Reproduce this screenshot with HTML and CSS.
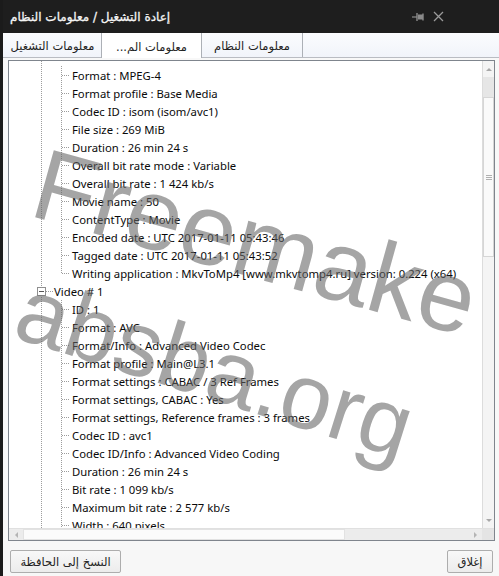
FILE: index.html
```html
<!DOCTYPE html>
<html lang="ar">
<head>
<meta charset="utf-8">
<title>معلومات النظام</title>
<link rel="stylesheet" href="styles.css">
</head>
<body>
<div class="window">
  <header class="titlebar">
    <span class="title" dir="rtl">إعادة التشغيل / معلومات النظام</span>
    <span class="controls">
      <svg class="pin" width="14" height="10" viewBox="0 0 14 10"><path d="M0 5h5" stroke="#8a8a8a" stroke-width="1.2"/><path d="M5 1v8" stroke="#8a8a8a" stroke-width="1.4"/><path d="M6 2.5h5v5H6z" fill="#8a8a8a"/><path d="M11 1.5v7" stroke="#8a8a8a" stroke-width="1.4"/></svg>
      <svg class="close" width="11" height="11" viewBox="0 0 11 11"><path d="M1 1l9 9M10 1l-9 9" stroke="#9a9a9a" stroke-width="1.3"/></svg>
    </span>
  </header>
  <nav class="tabs">
    <div class="tab first"><span dir="rtl">معلومات التشغيل</span></div>
    <div class="tab active"><span dir="ltr">...معلومات الم</span></div>
    <div class="tab"><span dir="rtl">معلومات النظام</span></div>
  </nav>
  <main class="panel">
    <div class="tree">
      <div class="tree-body">
        <ul class="rows">
          <li class="row leaf">Format : MPEG-4</li>
          <li class="row leaf">Format profile : Base Media</li>
          <li class="row leaf">Codec ID : isom (isom/avc1)</li>
          <li class="row leaf">File size : 269 MiB</li>
          <li class="row leaf">Duration : 26 min 24 s</li>
          <li class="row leaf">Overall bit rate mode : Variable</li>
          <li class="row leaf">Overall bit rate : 1 424 kb/s</li>
          <li class="row leaf">Movie name : 50</li>
          <li class="row leaf">ContentType : Movie</li>
          <li class="row leaf">Encoded date : UTC 2017-01-11 05:43:46</li>
          <li class="row leaf">Tagged date : UTC 2017-01-11 05:43:52</li>
          <li class="row leaf last">Writing application : MkvToMp4 [www.mkvtomp4.ru] version: 0.224 (x64)</li>
          <li class="row node"><span class="toggle"></span><span class="link"></span>Video # 1</li>
          <li class="row leaf">ID : 1</li>
          <li class="row leaf">Format : AVC</li>
          <li class="row leaf">Format/Info : Advanced Video Codec</li>
          <li class="row leaf">Format profile : Main@L3.1</li>
          <li class="row leaf">Format settings : CABAC / 3 Ref Frames</li>
          <li class="row leaf">Format settings, CABAC : Yes</li>
          <li class="row leaf">Format settings, Reference frames : 3 frames</li>
          <li class="row leaf">Codec ID : avc1</li>
          <li class="row leaf">Codec ID/Info : Advanced Video Coding</li>
          <li class="row leaf">Duration : 26 min 24 s</li>
          <li class="row leaf">Bit rate : 1 099 kb/s</li>
          <li class="row leaf">Maximum bit rate : 2 577 kb/s</li>
          <li class="row leaf">Width : 640 pixels</li>
        </ul>
        <div class="vscroll">
          <span class="arrow up"></span>
          <span class="track-top"></span>
          <span class="thumb"><span class="grip"></span></span>
          <span class="track-rest"></span>
          <span class="arrow down"></span>
        </div>
      </div>
      <div class="hscroll">
        <span class="harrow left"></span>
        <span class="hthumb"></span>
        <span class="htrack"></span>
        <span class="harrow right"></span>
        <span class="corner"></span>
      </div>
    </div>
  </main>
  <footer class="footer">
    <button class="btn copy" dir="rtl">النسخ إلى الحافظة</button>
    <button class="btn close-btn" dir="rtl">إغلاق</button>
  </footer>
  <div class="watermark">
    <span class="wm wm1">Freemake</span>
    <span class="wm wm2">absba.org</span>
  </div>
</div>
</body>
</html>
```

FILE: styles.css
```css
* { box-sizing: border-box; }
html, body { margin: 0; padding: 0; }
body {
  width: 499px;
  height: 576px;
  overflow: hidden;
  font-family: "Noto Sans", "DejaVu Sans", sans-serif;
  font-size: 11.3px;
  color: #0a0a0a;
  background: #f7f7f7;
}
.window {
  position: relative;
  width: 499px;
  height: 576px;
  display: flex;
  flex-direction: column;
  border-left: 3px solid #1b1b1b;
  background: #f8f8f8;
  overflow: hidden;
}
.titlebar {
  height: 33px;
  flex: none;
  background: #1e1e1e;
  display: flex;
  align-items: center;
  justify-content: space-between;
  padding: 0 55px 0 7px;
  margin-left: -3px;
}
.title {
  color: #f4f4f4;
  font-family: "DejaVu Sans", sans-serif;
  font-size: 12px;
  padding-left: 3px;
  -webkit-text-stroke: 0.3px #f4f4f4;
}
.controls {
  display: flex;
  align-items: center;
  gap: 7px;
}
.tabs {
  height: 25px;
  flex: none;
  display: flex;
  background: linear-gradient(#fbfcfe, #f1f4fa);
  border-bottom: 1px solid #b9bcc2;
  padding-left: 1px;
}
.tab {
  width: 101px;
  display: flex;
  align-items: center;
  justify-content: center;
  font-family: "DejaVu Sans", sans-serif;
  font-size: 11.5px;
  color: #222;
  border-right: 1px solid #acb0b6;
  padding-top: 2px;
}
.tab.first { width: 98px; }
.tab.active {
  background: #ffffff;
  border-left: 1px solid #acb0b6;
  margin-bottom: -1px;
  margin-left: -1px;
}
.panel {
  flex: none;
  height: 483px;
  padding: 2px 4px 0 5px;
}
.tree {
  height: 481px;
  border: 1px solid #7f858d;
  background: #fff;
  display: flex;
  flex-direction: column;
}
.tree-body {
  flex: 1;
  display: flex;
  min-height: 0;
}
.rows {
  list-style: none;
  margin: 0;
  padding: 5px 0 0 0;
  flex: 1;
  overflow: hidden;
  background: repeating-linear-gradient(to bottom, #9c9c9c 0 1px, transparent 1px 2px) 32px 0 / 1px 100% no-repeat;
}
.row {
  height: 18px;
  display: flex;
  align-items: center;
  white-space: nowrap;
}
.leaf {
  padding-left: 63px;
  background:
    repeating-linear-gradient(to right, #9c9c9c 0 1px, transparent 1px 2px) 53px 9px / 8px 1px no-repeat,
    repeating-linear-gradient(to bottom, #9c9c9c 0 1px, transparent 1px 2px) 52px 0 / 1px 18px no-repeat;
}
.leaf.last {
  background:
    repeating-linear-gradient(to right, #9c9c9c 0 1px, transparent 1px 2px) 53px 9px / 8px 1px no-repeat,
    repeating-linear-gradient(to bottom, #9c9c9c 0 1px, transparent 1px 2px) 52px 0 / 1px 10px no-repeat;
}
.node {
  padding-left: 28px;
}
.toggle {
  width: 9px;
  height: 9px;
  border: 1px solid #8f8f8f;
  background: linear-gradient(#555, #555) center / 5px 1px no-repeat, #fff;
  flex: none;
}
.link {
  width: 7px;
  height: 1px;
  margin: 0 1px 0 0;
  background: repeating-linear-gradient(to right, #9c9c9c 0 1px, transparent 1px 2px);
  flex: none;
}
.vscroll {
  width: 12px;
  flex: none;
  display: flex;
  flex-direction: column;
  background: #ececec;
  border-left: 1px solid #dcdcdc;
}
.arrow {
  height: 16px;
  flex: none;
  display: flex;
  align-items: center;
  justify-content: center;
  background: #f4f4f4;
}
.arrow::before {
  content: "";
  border-left: 3px solid transparent;
  border-right: 3px solid transparent;
}
.arrow.up::before { border-bottom: 3px solid #a8a8a8; }
.arrow.down::before { border-top: 3px solid #a8a8a8; }
.track-top { height: 20px; flex: none; background: #e6e6e6; }
.thumb {
  height: 160px;
  flex: none;
  background: #fafafa;
  border: 1px solid #d6d6d6;
  display: flex;
  align-items: center;
  justify-content: center;
}
.grip {
  width: 6px;
  height: 5px;
  background: repeating-linear-gradient(to bottom, #b0b0b0 0 1px, transparent 1px 2px);
}
.track-rest { flex: 1; background: #f4f4f4; }
.hscroll {
  height: 12px;
  flex: none;
  display: flex;
  background: #ececec;
  border-top: 1px solid #e0e0e0;
}
.harrow {
  width: 14px;
  flex: none;
  display: flex;
  align-items: center;
  justify-content: center;
}
.harrow::before {
  content: "";
  border-top: 3px solid transparent;
  border-bottom: 3px solid transparent;
}
.harrow.left::before { border-right: 3px solid #b4b4b4; }
.harrow.right::before { border-left: 3px solid #b4b4b4; }
.hthumb { width: 322px; flex: none; background: #fbfbfb; border: 1px solid #e2e2e2; }
.htrack { flex: 1; background: #ececec; }
.corner { width: 12px; flex: none; background: #e4e4e4; }
.footer {
  flex: 1;
  display: flex;
  justify-content: space-between;
  align-items: flex-start;
  padding: 9px 6px 0 7px;
  background: #f7f7f7;
}
.btn {
  height: 23px;
  border: 1px solid #adadad;
  border-radius: 2px;
  background: linear-gradient(#f8f8f8, #ececec);
  font-family: "DejaVu Sans", sans-serif;
  font-size: 11.5px;
  color: #222;
  padding: 0;
  white-space: nowrap;
}
.btn.copy { width: 111px; }
.btn.close-btn { width: 46px; }
.watermark {
  position: absolute;
  inset: 0;
  pointer-events: none;
}
.wm {
  position: absolute;
  font-family: "Liberation Sans", sans-serif;
  line-height: 1;
  color: rgba(100, 100, 100, 0.58);
  transform-origin: 0 0;
  white-space: nowrap;
}
.wm1 { left: 47px; top: 133px; font-size: 101px; transform: rotate(15.5deg); }
.wm2 { left: 31px; top: 262px; font-size: 92px; transform: rotate(17.5deg); }
```
